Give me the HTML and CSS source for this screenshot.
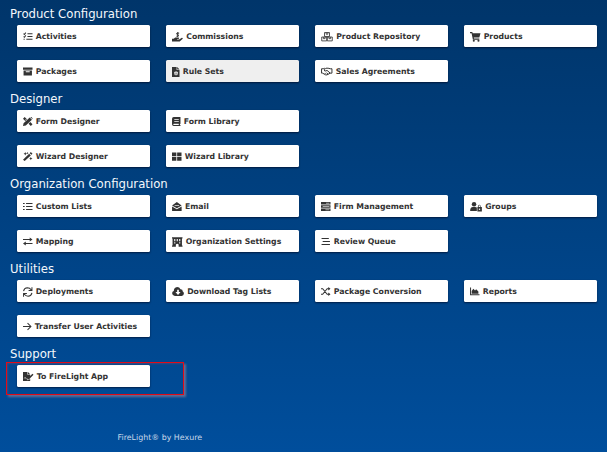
FILE: index.html
```
<!DOCTYPE html>
<html lang="en">
<head>
<meta charset="utf-8">
<title>FireLight Administration</title>
<link rel="stylesheet" href="styles.css">
</head>
<body>
<main>
<section>
<h2>Product Configuration</h2>
<div class="tiles">
<a class="tile"><svg width="9.5" height="9" viewBox="0 0 17 16"><path class="line" d="M1 3l1.500 1.500L5 1M1 8l1.500 1.500L5 6M8 3h9M8 8h9M6 13h11M1 13h2"/></svg>Activities</a>
<a class="tile"><svg width="11" height="10" viewBox="0 0 20 18"><path d="M0 12h3l3-2h6q2 1 0 2.500H9v1h4l5-3q2 0 1.500 1.500L14 17H0z"/><path class="line" d="M13 2H9q-2 2 1 2.500 3 .5 1 3H8M10.500 0v9"/></svg>Commissions</a>
<a class="tile"><svg width="12" height="10" viewBox="0 0 21 18"><path class="thin" d="M6 1h9v7H6zM1 9h9v7H1zM11 9h9v7h-9zM9 1v3h3V1M4 9v3h3V9M14 9v3h3V9"/></svg>Product Repository</a>
<a class="tile"><svg width="10.500" height="10" viewBox="0 0 18 17"><path d="M0 0h4l.5 2H18l-2 7.500H6.500l.3 1.500H16v2H5L2.700 2H0z"/><circle cx="6.500" cy="15" r="1.800"/><circle cx="14.500" cy="15" r="1.800"/></svg>Products</a>
<a class="tile"><svg width="9.500" height="9" viewBox="0 0 17 16"><path d="M0 1h17v4H0zM1 6h15v9H1zM5 7.500v2h7v-2z" fill-rule="evenodd"/></svg>Packages</a>
<a class="tile active"><svg width="7.500" height="10" viewBox="0 0 13 17"><path d="M0 0h8v5h5v12H0zM9 0l4 4H9zM6 7v1.500L4.500 8l-1 1.700 1.300.8-1.300 1 1 1.700 1.500-.7V14h2v-1.500l1.500.7 1-1.700-1.300-1 1.300-.8-1-1.700-1.500.5V7zM7 9.500a1 1 0 110 2 1 1 0 010-2z" fill-rule="evenodd"/></svg>Rule Sets</a>
<a class="tile"><svg width="11.500" height="9" viewBox="0 0 21 16"><path class="line" d="M1 3v8h2l5 3q3 1 5-1l4-2h3V3h-3l-4-1H9L6 5q0 3 3 2l2-1 6 5M1 3h3l3-1M9 13l-2-2M13 13l-3-3"/></svg>Sales Agreements</a>
</div>
</section>
<section>
<h2>Designer</h2>
<div class="tiles two">
<a class="tile"><svg width="9.500" height="9" viewBox="0 0 17 16"><path d="M0 3l3-3 4 4-1 1.500L5 4 4 5l1.500 1.500L4 7zM10 12l3-3 4 4-3 3zM12 1l4 4L5 15l-5 1 1-5zM13 0l2 0 2 2v2z"/></svg>Form Designer</a>
<a class="tile"><svg width="8.500" height="9" viewBox="0 0 15 16"><path d="M3 0h12v12l-1 1v1h1v2H3q-3 0-3-3V3q0-3 3-3zM4 3.500v1.500h8V3.500zM4 7v1.500h8V7zM3 12q-2 1 0 2h9v-2z" fill-rule="evenodd"/></svg>Form Library</a>
<a class="tile"><svg width="9.500" height="9" viewBox="0 0 17 16"><path d="M0 14L11 3l3 3L3 16zM12 2l2-2 3 3-2 2zM3 2l1-2 1 2 2 1-2 1-1 2-1-2-2-1zM8 0l.7 1.300L10 2l-1.300.7L8 4l-.7-1.300L6 2l1.300-.7zM14 9l1 1.500 2 1-2 1-1 2-1-2-2-1 2-1z"/></svg>Wizard Designer</a>
<a class="tile"><svg width="9.500" height="9" viewBox="0 0 17 16"><path d="M0 1h7.800v6.500H0zM9.200 1H17v6.500H9.200zM0 9h7.800v6.500H0zM9.200 9H17v6.500H9.200z"/></svg>Wizard Library</a>
</div>
</section>
<section>
<h2>Organization Configuration</h2>
<div class="tiles">
<a class="tile"><svg width="9.500" height="9" viewBox="0 0 17 16"><path class="line" d="M0 2.500h3M0 8h3M0 13.500h3M5.500 2.500H17M5.500 8H17M5.500 13.500H17"/></svg>Custom Lists</a>
<a class="tile"><svg width="9.700" height="9" viewBox="0 0 17 16"><path d="M8.500 0L17 6l-8.500 5L0 6zM0 8l8.500 5L17 8v8H0z"/><path class="slit" d="M4.500 6.300h8"/></svg>Email</a>
<a class="tile"><svg width="9.500" height="9" viewBox="0 0 17 16"><path d="M0 0h17v4.500H0zM0 5.700h17v4.600H0zM0 11.500h17V16H0z"/><path class="grey" d="M9 1.500h6v1.500H9zM3 7.200h12v1.500H3zM8 13h7v1.500H8z"/></svg>Firm Management</a>
<a class="tile"><svg width="12" height="9.500" viewBox="0 0 21 17"><circle cx="7" cy="4" r="4"/><path d="M0 16q0-7 5-7h4q2 0 3 1v6zM13 9h1V7q2.500-4 5 0v2h2v8h-8V9zM15.300 9h2.700V7q-1.400-2-2.700 0z" fill-rule="evenodd"/><circle class="white" cx="16.800" cy="13" r="1.300"/></svg>Groups</a>
<a class="tile"><svg width="9.500" height="9" viewBox="0 0 17 16"><path class="line" d="M0 4.500h15M2 11.500h15"/><path d="M12 1l5 3.500L12 8zM5 8v7l-5-3.500z"/></svg>Mapping</a>
<a class="tile"><svg width="10.500" height="10" viewBox="0 0 19 17"><path d="M0 0h19v2h-1v13h1v2h-7v-4q-2.500-3-5 0v4H0v-2h1V2H0zM4 3v4h2V3zM8.500 3v4h2V3zM13 3v4h2V3zM4 9v2h2V9zM13 9v2h2V9z" fill-rule="evenodd"/></svg>Organization Settings</a>
<a class="tile"><svg width="9.500" height="9" viewBox="0 0 17 16"><path class="line" d="M1 2.500h13M3 8h13M1 13.500h15"/></svg>Review Queue</a>
</div>
</section>
<section>
<h2>Utilities</h2>
<div class="tiles">
<a class="tile"><svg width="9.500" height="10" viewBox="0 0 17 17"><path class="line" d="M1 7q1-5.500 7-6 4 0 7 4M16 0v6h-6M16 10q-1 5.500-7 6-4 0-7-4M1 17v-6h6"/></svg>Deployments</a>
<a class="tile"><svg width="12" height="9" viewBox="0 0 21 16"><path d="M5 16q-5-1-5-5 0-3 3-4 0-6 6-7 4 0 6 4 4 0 4 4 2 1 2 4-.5 3-4 4zM9 5v4H6l4.500 5L15 9h-3V5z" fill-rule="evenodd"/></svg>Download Tag Lists</a>
<a class="tile"><svg width="9.500" height="9" viewBox="0 0 17 16"><path class="line" d="M0 3h3l8 10h4M0 13h3l8-10h4"/><path d="M13 0l4 3-4 3zM13 10l4 3-4 3z"/></svg>Package Conversion</a>
<a class="tile"><svg width="9.500" height="9" viewBox="0 0 17 16"><path class="line" d="M1 1v13h16"/><path d="M3 12V7l3-4 3 3 2-2 4 4v4z"/></svg>Reports</a>
<a class="tile"><svg width="8.500" height="9" viewBox="0 0 15 16"><path class="line" d="M0 8h14M8 2l6 6-6 6"/></svg>Transfer User Activities</a>
</div>
</section>
<section class="support">
<h2>Support</h2>
<div class="tiles">
<a class="tile"><svg width="10.500" height="9" viewBox="0 0 19 16"><path d="M0 0h8v5h5v2l-5 5-1 3 4-1 2-2v4H0zM9 0l4 4H9zM17 3l2 2-8 8-3 1 1-3z"/><path class="pale" d="M2 12l2-3 1 3h2"/></svg>To FireLight App</a>
</div>
<div class="highlight"></div>
</section>
</main>
<footer>FireLight® by Hexure</footer>
</body>
</html>
```
FILE: styles.css
```
* { box-sizing: border-box; }
body {
  margin: 0;
  height: 452px;
  overflow: hidden;
  background: linear-gradient(#00356a, #004e9c);
  font-family: "DejaVu Sans", sans-serif;
}
main { padding: 5.3px 10px 0; }
section { margin-bottom: 8px; }
h2 {
  margin: 0 0 4px;
  height: 16px;
  color: #f4f8fc;
  font-size: 11.7px;
  font-weight: 400;
  line-height: 18px;
}
.tiles {
  display: grid;
  grid-template-columns: repeat(4, 133.5px);
  gap: 13px 15.5px;
  padding-left: 6.7px;
}
.tiles.two { grid-template-columns: repeat(2, 133.5px); }
.tile {
  display: flex;
  align-items: center;
  gap: 3px;
  height: 22px;
  padding: 1px 0 0 6.5px;
  border-radius: 1.5px;
  background: #fff;
  color: #333;
  font-size: 7.75px;
  font-weight: 700;
  line-height: 10px;
  white-space: nowrap;
  box-shadow: 0 1px 2px rgba(0, 0, 20, .6);
}
.tile.active { background: #efefef; }
svg { flex: none; fill: #333; }
.line { fill: none; stroke: #333; stroke-width: 1.8; }
.thin { fill: none; stroke: #333; stroke-width: 1.5; }
.grey { fill: #aaa; }
.white { fill: #fff; }
.slit { fill: none; stroke: #ddd; stroke-width: 1.5; }
.pale { fill: none; stroke: #ddd; stroke-width: 1; }
.support { position: relative; }
.highlight {
  position: absolute;
  left: -4.500px;
  top: 17px;
  width: 178.500px;
  height: 33px;
  border: 1.5px solid #e30b17;
  box-shadow: 2px 2px 2px rgba(130, 120, 150, .75), inset 1px 1px 2px rgba(100, 70, 110, .6);
}
footer {
  margin: 44px 0 0 117.500px;
  color: #c9d9ea;
  font-size: 7.9px;
  line-height: 14px;
}
```
